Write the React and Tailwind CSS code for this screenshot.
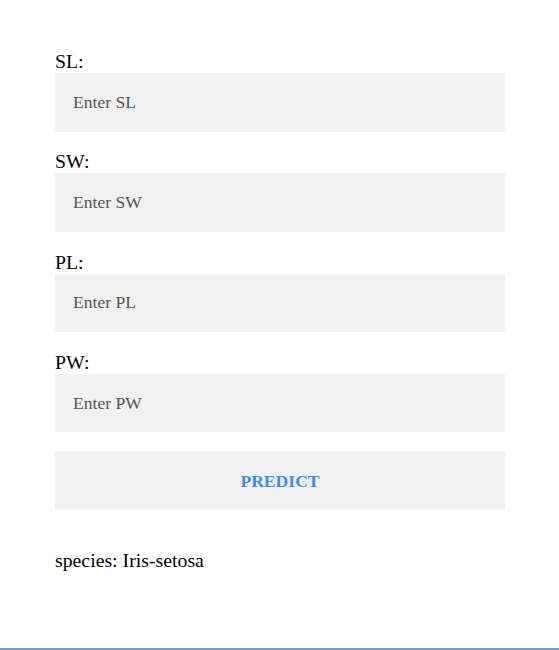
const fields = ['SL', 'SW', 'PL', 'PW']

export default function App() {
  return (
    <div className="h-[650px] bg-white border-b-2 border-[#6a9be8] font-['Liberation_Serif',serif] text-black">
      <form className="ml-[55px] w-[450px] pt-[50.2px]">
        {fields.map((f) => (
          <div key={f} className="mb-[18.9px]">
            <label className="block text-[19.8px] leading-[22.8px]">{f}:</label>
            <input
              type="text"
              placeholder={`Enter ${f}`}
              className="block w-full h-[58.6px] px-[18px] bg-[#f1f1f1] text-[17.6px] outline-none placeholder:text-[#555]"
            />
          </div>
        ))}
        <button
          type="button"
          className="block w-full h-[58.8px] bg-[#f1f1f1] text-[17.6px] font-bold text-[#3d8bf0]"
        >
          PREDICT
        </button>
        <p className="mt-[38.4px] text-[19.8px] leading-[22.8px]">species: Iris-setosa</p>
      </form>
    </div>
  )
}
